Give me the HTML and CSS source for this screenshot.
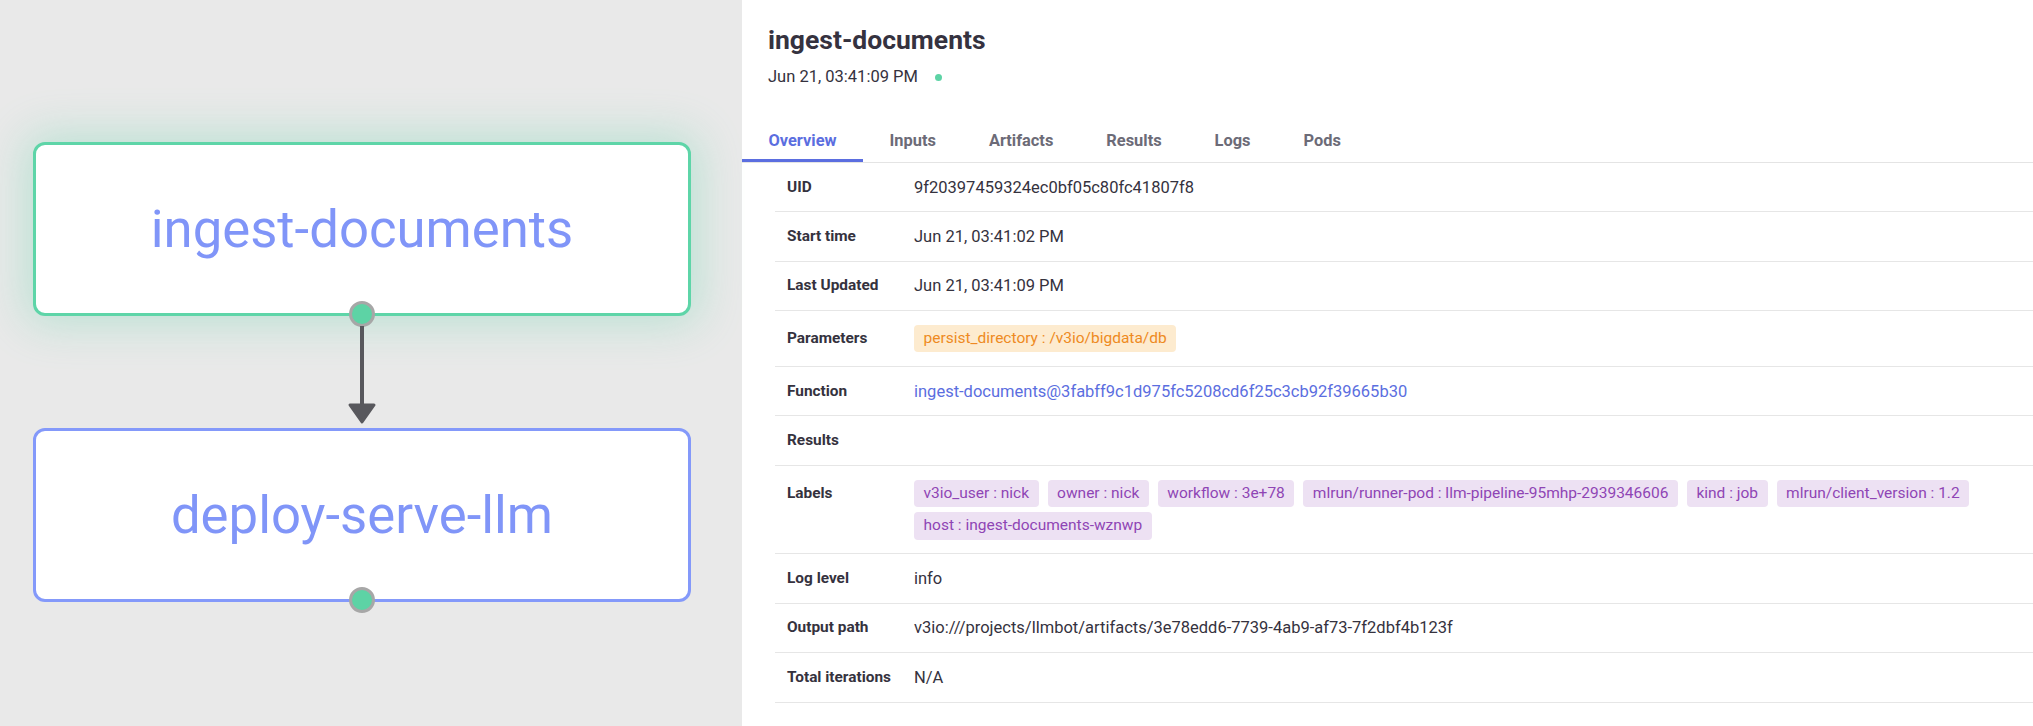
FILE: index.html
```html
<!DOCTYPE html>
<html lang="en">
<head>
<meta charset="utf-8">
<title>ingest-documents</title>
<link rel="stylesheet" href="styles.css">
</head>
<body>
<div class="app">
  <section class="canvas">
    <div class="node node--active node--first">
      <span class="node-label">ingest-documents</span>
      <span class="handle"></span>
    </div>
    <svg class="edge" width="60" height="110" viewBox="0 0 60 110">
      <line x1="30" y1="10" x2="30" y2="92" stroke="#58585d" stroke-width="4"/>
      <polygon points="18,89 42,89 30,106" fill="#58585d" stroke="#58585d" stroke-width="3" stroke-linejoin="round"/>
    </svg>
    <div class="node node--second">
      <span class="node-label">deploy-serve-llm</span>
      <span class="handle"></span>
    </div>
  </section>
  <section class="details">
    <header class="details-head">
      <h1 class="details-title">ingest-documents</h1>
      <div class="details-date">Jun 21, 03:41:09 PM <span class="status-dot"></span></div>
    </header>
    <nav class="tabs">
      <a class="tab tab--active">Overview</a>
      <a class="tab">Inputs</a>
      <a class="tab">Artifacts</a>
      <a class="tab">Results</a>
      <a class="tab">Logs</a>
      <a class="tab">Pods</a>
    </nav>
    <div class="table">
      <div class="row"><div class="cell-label">UID</div><div class="cell-value">9f20397459324ec0bf05c80fc41807f8</div></div>
      <div class="row"><div class="cell-label">Start time</div><div class="cell-value">Jun 21, 03:41:02 PM</div></div>
      <div class="row"><div class="cell-label">Last Updated</div><div class="cell-value">Jun 21, 03:41:09 PM</div></div>
      <div class="row row--chips"><div class="cell-label">Parameters</div><div class="cell-value chips"><span class="chip chip--param">persist_directory : /v3io/bigdata/db</span></div></div>
      <div class="row"><div class="cell-label">Function</div><div class="cell-value"><a class="link">ingest-documents@3fabff9c1d975fc5208cd6f25c3cb92f39665b30</a></div></div>
      <div class="row"><div class="cell-label">Results</div><div class="cell-value"></div></div>
      <div class="row row--chips"><div class="cell-label">Labels</div><div class="cell-value chips">
        <span class="chip chip--label">v3io_user : nick</span>
        <span class="chip chip--label">owner : nick</span>
        <span class="chip chip--label">workflow : 3e+78</span>
        <span class="chip chip--label">mlrun/runner-pod : llm-pipeline-95mhp-2939346606</span>
        <span class="chip chip--label">kind : job</span>
        <span class="chip chip--label">mlrun/client_version : 1.2</span>
        <span class="chip chip--label">host : ingest-documents-wznwp</span>
      </div></div>
      <div class="row"><div class="cell-label">Log level</div><div class="cell-value">info</div></div>
      <div class="row"><div class="cell-label">Output path</div><div class="cell-value">v3io:///projects/llmbot/artifacts/3e78edd6-7739-4ab9-af73-7f2dbf4b123f</div></div>
      <div class="row"><div class="cell-label">Total iterations</div><div class="cell-value">N/A</div></div>
    </div>
  </section>
</div>
</body>
</html>
```

FILE: styles.css
```css
* { box-sizing: border-box; }
html, body { margin: 0; padding: 0; }
body {
  font-family: Roboto, "Liberation Sans", sans-serif;
  background: #ffffff;
  color: #35323e;
  overflow: hidden;
}
.app {
  display: flex;
  width: 2033px;
  height: 726px;
}
.canvas {
  position: relative;
  width: 742px;
  flex: none;
  background: #e9e9e9;
}
.node {
  position: absolute;
  left: 33px;
  width: 658px;
  height: 174px;
  background: #ffffff;
  border: 3px solid #8499fa;
  border-radius: 12px;
  display: flex;
  align-items: center;
  justify-content: center;
}
.node--first { top: 142px; }
.node--second { top: 428px; }
.node--active {
  border-color: #5ed5a8;
  box-shadow: 0 0 44px 8px rgba(94, 213, 168, 0.32);
}
.node-label {
  font-size: 52.7px;
  color: #8095f8;
  line-height: 1;
}
.handle {
  position: absolute;
  left: 50%;
  bottom: -14px;
  margin-left: -13px;
  width: 26px;
  height: 26px;
  border-radius: 50%;
  background: #5dd3a5;
  border: 3px solid #a7a7a7;
}
.edge {
  position: absolute;
  left: 332px;
  top: 316px;
}
.details {
  flex: 1;
  min-width: 0;
  background: #ffffff;
}
.details-head {
  padding: 24px 0 0 26px;
}
.details-title {
  margin: 0;
  font-size: 26.5px;
  line-height: 32px;
  font-weight: 700;
  color: #35323f;
}
.details-date {
  margin-top: 11px;
  font-size: 16.5px;
  line-height: 20px;
  color: #35323e;
  display: flex;
  align-items: center;
}
.status-dot {
  display: inline-block;
  width: 7px;
  height: 7px;
  border-radius: 50%;
  background: #5dd3a5;
  margin-left: 17px;
}
.tabs {
  display: flex;
  margin-top: 33px;
  border-bottom: 1px solid #e4e4e4;
}
.tab {
  position: relative;
  padding: 11px 26.5px 11px;
  font-size: 16.4px;
  line-height: 20px;
  font-weight: 700;
  color: #6c6b77;
}
.tab--active { color: #5b6ee0; }
.tab--active::after {
  content: "";
  position: absolute;
  left: 0;
  right: 0;
  bottom: 0;
  height: 3px;
  background: #5b6ee0;
}
.table {
  margin-left: 33px;
}
.row {
  display: grid;
  grid-template-columns: 127px 1fr;
  align-items: start;
  padding: 13.7px 12px;
  border-bottom: 1px solid #e6e6e6;
  font-size: 16.5px;
  line-height: 21px;
}
.cell-label {
  font-size: 15.4px;
  font-weight: 700;
  color: #35323e;
}
.row--chips .cell-label { line-height: 26px; }
.cell-value { color: #35323e; }
.link { color: #5b6ee0; }
.chips {
  display: flex;
  flex-wrap: wrap;
  gap: 5px 9px;
}
.chip {
  display: inline-block;
  height: 27.6px;
  line-height: 27.6px;
  padding: 0 9.5px;
  border-radius: 4px;
  font-size: 15.5px;
}
.chip--param { background: #fdebcf; color: #ee8a22; }
.chip--label { background: #ede1f3; color: #8f45b5; }
```
